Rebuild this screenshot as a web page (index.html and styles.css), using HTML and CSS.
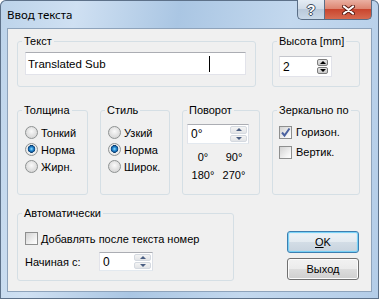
FILE: index.html
```html
<!DOCTYPE html>
<html lang="ru">
<head>
    <meta charset="UTF-8">
    <title>Ввод текста</title>
    <link rel="stylesheet" href="styles.css">
</head>
<body>
    <div class="window">
        <div class="titlebar">
            <span class="title">Ввод текста</span>
            <div class="caption-btns">
                <span class="cap-btn help">?</span>
                <span class="cap-btn close">
                    <svg width="13" height="10" viewBox="0 0 13 10">
                        <path d="M2 1.5 L11 8.5 M11 1.5 L2 8.5" stroke="#5a1c14" stroke-width="4" stroke-linecap="round"/>
                        <path d="M2 1.5 L11 8.5 M11 1.5 L2 8.5" stroke="#fff" stroke-width="2.2" stroke-linecap="round"/>
                    </svg>
                </span>
            </div>
        </div>

        <div class="client">
            <div class="row row1">
                <fieldset class="gb gb-text">
                    <legend>Текст</legend>
                    <div class="edit text-edit">Translated Sub<span class="caret"></span></div>
                </fieldset>
                <fieldset class="gb gb-height">
                    <legend>Высота [mm]</legend>
                    <div class="spin-old">
                        <span class="val">2</span>
                        <span class="old-btns">
                            <span class="old-btn up"></span>
                            <span class="old-btn down"></span>
                        </span>
                    </div>
                </fieldset>
            </div>

            <div class="row row2">
                <fieldset class="gb gb-weight">
                    <legend>Толщина</legend>
                    <div class="opts">
                        <div class="opt"><span class="radio"></span>Тонкий</div>
                        <div class="opt"><span class="radio on"></span>Норма</div>
                        <div class="opt"><span class="radio"></span>Жирн.</div>
                    </div>
                </fieldset>
                <fieldset class="gb gb-style">
                    <legend>Стиль</legend>
                    <div class="opts">
                        <div class="opt"><span class="radio"></span>Узкий</div>
                        <div class="opt"><span class="radio on"></span>Норма</div>
                        <div class="opt"><span class="radio"></span>Широк.</div>
                    </div>
                </fieldset>
                <fieldset class="gb gb-rotate">
                    <legend>Поворот</legend>
                    <div class="spin rotate-spin">
                        <span class="val">0°</span>
                        <span class="spin-btns"><span class="sb up"></span><span class="sb down"></span></span>
                    </div>
                    <div class="angles">
                        <span>0°</span><span>90°</span>
                        <span>180°</span><span>270°</span>
                    </div>
                </fieldset>
                <fieldset class="gb gb-mirror">
                    <legend>Зеркально по</legend>
                    <div class="checks">
                        <div class="chk-row">
                            <span class="check on">
                                <svg width="11" height="11" viewBox="0 0 11 11">
                                    <path d="M2 5.5 L4.5 8.5 L9.5 1.5" fill="none" stroke="#4b62a0" stroke-width="2"/>
                                </svg>
                            </span>Горизон.
                        </div>
                        <div class="chk-row"><span class="check"></span>Вертик.</div>
                    </div>
                </fieldset>
            </div>

            <div class="row row3">
                <fieldset class="gb gb-auto">
                    <legend>Автоматически</legend>
                    <div class="opt auto-opt"><span class="check"></span>Добавлять после текста номер</div>
                    <div class="start-row">
                        <span class="start-label">Начиная с:</span>
                        <div class="spin start-spin">
                            <span class="val">0</span>
                            <span class="spin-btns"><span class="sb up"></span><span class="sb down"></span></span>
                        </div>
                    </div>
                </fieldset>
                <div class="buttons">
                    <div class="btn default"><span><u>O</u>K</span></div>
                    <div class="btn">Выход</div>
                </div>
            </div>
        </div>
    </div>
</body>
</html>
```

FILE: styles.css
```css
body {
    margin: 0;
    font-family: "Liberation Sans", Arial, sans-serif;
    font-size: 11px;
    color: #000;
    background: #fff;
}
.window {
    width: 379px;
    height: 299px;
    box-sizing: border-box;
    display: flex;
    flex-direction: column;
    padding: 0 7px 7px 7px;
    border-radius: 6px 6px 0 0;
    background: linear-gradient(100deg, #bcd3ea 0%, #cfe0f2 18%, #aac6e3 42%, #c3d8ee 68%, #b4cde8 100%);
    box-shadow: inset 0 0 0 1px #5d7189;
}
/* title bar */
.titlebar {
    height: 28px;
    display: flex;
    align-items: flex-start;
}
.title {
    margin-top: 7px;
    font-family: "Noto Sans", sans-serif;
    font-size: 11.5px;
    line-height: 15px;
}
.caption-btns {
    margin-left: auto;
    display: flex;
}
.cap-btn {
    height: 20px;
    box-sizing: border-box;
    display: flex;
    align-items: center;
    justify-content: center;
    border: 1px solid #5a6e86;
    border-top: none;
}
.help {
    width: 27px;
    border-right: none;
    border-radius: 0 0 0 5px;
    background: linear-gradient(#e4ecf4, #d1dce8 45%, #b8c8d9 46%, #c9d8e8);
    color: #fff;
    font-weight: bold;
    font-size: 14px;
    text-shadow: 1px 0 0 #3e4d60, -1px 0 0 #3e4d60, 0 1px 0 #3e4d60, 0 -1px 0 #3e4d60;
}
.close {
    width: 48px;
    border-radius: 0 0 5px 0;
    background: linear-gradient(#eab0a2, #dd8672 45%, #c8432c 46%, #d66a50);
}
/* client area */
.client {
    flex: 1;
    box-sizing: border-box;
    border: 1px solid #8ea3bb;
    background: #f0f0f0;
    padding: 6px 0 0 9px;
}
.row {
    display: flex;
}
.row1 {
    gap: 16px;
    height: 52px;
}
.row2 {
    margin-top: 17px;
    gap: 12px;
    height: 91px;
}
.row3 {
    margin-top: 12px;
    height: 74px;
}
.gb {
    margin: 0;
    padding: 0;
    min-width: 0;
    box-sizing: border-box;
    border: 1px solid #d5dfe5;
    border-radius: 3px;
}
.gb legend {
    padding: 0 2px;
    margin-left: 4px;
    line-height: 13px;
}
.gb-text { width: 239px; }
.gb-height { width: 88px; }
.gb-weight { width: 71px; }
.gb-style { width: 70px; }
.gb-rotate { width: 78px; }
.gb-mirror { width: 88px; }
.gb-auto { width: 217px; }
/* edits */
.edit {
    position: relative;
    box-sizing: border-box;
    background: #fff;
    border: 1px solid #e2e3ea;
    border-top-color: #abadb3;
    padding-left: 2px;
    display: flex;
    align-items: center;
}
.text-edit {
    margin: 4px 0 0 7px;
    width: 221px;
    height: 23px;
    font-size: 11.5px;
}
.caret {
    position: absolute;
    left: 183px;
    top: 3px;
    width: 1px;
    height: 16px;
    background: #000;
}
.spin-old {
    margin: 8px 0 0 6px;
    width: 53px;
    height: 21px;
    box-sizing: border-box;
    background: #fff;
    border: 1px solid #e2e3ea;
    border-top-color: #c4c6cc;
    display: flex;
    align-items: center;
    padding: 0 3px 0 3px;
    font-size: 12px;
}
.spin-old .val {
    flex: 1;
}
.old-btns {
    display: flex;
    flex-direction: column;
    gap: 1px;
}
.old-btn {
    width: 11px;
    height: 7px;
    box-sizing: border-box;
    border: 1px solid #7d7d7d;
    border-radius: 2px;
    background: linear-gradient(#e6e6e6, #c8c8c8);
    display: flex;
    align-items: center;
    justify-content: center;
}
.old-btn.up::before,
.sb.up::before {
    content: "";
    border-left: 3px solid transparent;
    border-right: 3px solid transparent;
    border-bottom: 3px solid #000;
}
.old-btn.down::before,
.sb.down::before {
    content: "";
    border-left: 3px solid transparent;
    border-right: 3px solid transparent;
    border-top: 3px solid #000;
}
.spin {
    box-sizing: border-box;
    background: #fff;
    border: 1px solid #abadb3;
    border-color: #abadb3 #dbdfe6 #e3e9ef #e2e3ea;
    display: flex;
    padding: 1px;
    font-size: 12px;
}
.spin .val {
    flex: 1;
    padding-left: 2px;
    display: flex;
    align-items: center;
}
.spin-btns {
    width: 17px;
    display: flex;
    flex-direction: column;
    gap: 1px;
}
.sb {
    flex: 1;
    box-sizing: border-box;
    border: 1px solid #d4d9e0;
    border-radius: 2px;
    background: linear-gradient(#f4f4f4, #e2e4e7);
    display: flex;
    align-items: center;
    justify-content: center;
}
.sb.up::before { border-bottom-color: #4a5e82; }
.sb.down::before { border-top-color: #4a5e82; }
.rotate-spin {
    margin: 7px 0 0 4px;
    width: 62px;
    height: 20px;
}
.angles {
    display: grid;
    grid-template-columns: 30px 32px;
    margin: 4px 0 0 5px;
    line-height: 18px;
    text-align: center;
}
/* radios and checks */
.opts {
    padding: 7px 0 0 7px;
}
.opt {
    display: flex;
    align-items: center;
    height: 17px;
    gap: 3px;
    white-space: nowrap;
}
.radio {
    flex: none;
    width: 13px;
    height: 13px;
    box-sizing: border-box;
    border-radius: 50%;
    border: 1px solid #8e9292;
    background: radial-gradient(circle at 50% 40%, #fafafa 0, #e4e4e4 45%, #cfcfcf 100%);
}
.radio.on {
    background: radial-gradient(circle at 50% 45%, #9fe0fb 0, #2f96dc 1.6px, #125a9c 3px, #0c3d6d 3.6px, #f2f2f2 4.1px, #d8d8d8 100%);
}
.checks {
    padding: 5px 0 0 6px;
}
.chk-row {
    display: flex;
    align-items: center;
    height: 20px;
    gap: 4px;
}
.check {
    flex: none;
    width: 13px;
    height: 13px;
    box-sizing: border-box;
    border: 1px solid #8e8f8f;
    background: linear-gradient(135deg, #d2d2d2, #f4f4f4 70%, #fff);
    display: flex;
    align-items: center;
    justify-content: center;
}
.auto-opt {
    margin-top: 10px;
    padding-left: 7px;
}
.start-row {
    margin-top: 4px;
    padding-left: 7px;
    display: flex;
    align-items: center;
    height: 21px;
}
.start-label {
    width: 74px;
}
.start-spin {
    width: 54px;
    height: 19px;
}
/* buttons */
.buttons {
    margin-left: 53px;
    padding-top: 24px;
    display: flex;
    flex-direction: column;
    gap: 5px;
}
.btn {
    width: 72px;
    height: 22px;
    box-sizing: border-box;
    border: 1px solid #707070;
    border-radius: 3px;
    background: linear-gradient(#f2f2f2 0, #ebebeb 50%, #dddddd 50%, #cfcfcf 100%);
    box-shadow: inset 0 0 0 1px #fcfcfc;
    display: flex;
    align-items: center;
    justify-content: center;
}
.btn.default {
    border-color: #3c7fb1;
    background: linear-gradient(#eef3f7 0, #e3eaf0 50%, #d3dde6 50%, #c8d3de 100%);
    box-shadow: inset 0 0 1px 1px #6fd0f8;
}
```
